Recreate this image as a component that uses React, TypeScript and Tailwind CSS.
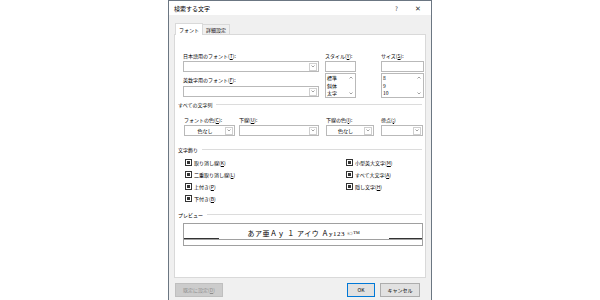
import type { ReactNode } from "react";

function Acc({ pre, k, post = "" }: { pre: string; k: string; post?: string }) {
  return (
    <>
      {pre}(<span className="underline">{k}</span>){post}
    </>
  );
}

function Combo({ width, value }: { width: string; value?: string }) {
  return (
    <div className={`${width} h-[11px] bg-white border border-[#b9b9b9] flex items-center`}>
      <div className="flex-1 text-center leading-[9px]">{value}</div>
      <div className="w-[8px] h-[8px] mr-[1px] border border-[#cfcfcf] flex items-center justify-center">
        <svg width="4" height="3" viewBox="0 0 4 3">
          <path d="M0.5 0.5 L2 2 L3.5 0.5" fill="none" stroke="#7a7a7a" strokeWidth="0.7" />
        </svg>
      </div>
    </div>
  );
}

function ListBox({ items }: { items: string[] }) {
  return (
    <div className="h-[25px] bg-white border border-[#b9b9b9] flex">
      <div className="flex-1 pl-[1px] leading-[7.5px]">
        {items.map((it) => (
          <div key={it}>{it}</div>
        ))}
      </div>
      <div className="w-[8px] flex flex-col justify-between items-center py-[2px]">
        <svg width="4" height="3" viewBox="0 0 4 3">
          <path d="M0.5 2.5 L2 1 L3.5 2.5" fill="none" stroke="#7a7a7a" strokeWidth="0.7" />
        </svg>
        <svg width="4" height="3" viewBox="0 0 4 3">
          <path d="M0.5 0.5 L2 2 L3.5 0.5" fill="none" stroke="#7a7a7a" strokeWidth="0.7" />
        </svg>
      </div>
    </div>
  );
}

function Group({ title, className = "" }: { title: string; className?: string }) {
  return (
    <div className={`flex items-center gap-[4px] pl-[3px] pr-[3px] h-[7px] leading-[7px] ${className}`}>
      <span>{title}</span>
      <div className="flex-1 h-px bg-[#dcdcdc]" />
    </div>
  );
}

function Check({ children }: { children: ReactNode }) {
  return (
    <div className="h-[12px] flex items-center gap-[2px]">
      <div className="w-[7px] h-[7px] border border-[#333] bg-white p-px">
        <div className="w-[3px] h-[3px] bg-[#333]" />
      </div>
      <span className="leading-[7px]">{children}</span>
    </div>
  );
}

export default function App() {
  return (
    <div className="w-[600px] h-[300px] bg-white flex justify-center font-['Noto_Sans_CJK_JP',sans-serif] text-[5px] text-black overflow-hidden">
      <div className="w-[264px] h-[300px] bg-[#f0f0f0] border-t border-x border-[#6b7682] flex flex-col">
        {/* title bar */}
        <div className="h-[14px] bg-white flex items-center pl-[5px] pr-[10px] text-[6px]">
          <span className="flex-1">検索する文字</span>
          <span className="w-[20px] text-[#333]">?</span>
          <span className="text-[#333] text-[7px]">✕</span>
        </div>

        {/* tabs */}
        <div className="flex items-end h-[19px] pl-[6px] pt-[7px]">
          <div className="h-[12px] px-[3px] bg-white border border-b-0 border-[#d9d9d9] flex items-center relative top-px z-10">
            フォント
          </div>
          <div className="h-[10px] px-[3px] bg-[#f0f0f0] border border-l-0 border-b-0 border-[#d9d9d9] flex items-center">
            詳細設定
          </div>
        </div>

        {/* panel */}
        <div className="mx-[5px] h-[244px] bg-white border border-[#d9d9d9] flex flex-col">
          {/* fonts */}
          <div className="mt-[17px] flex pl-[8px]">
            <div className="w-[136px] flex flex-col">
              <div className="leading-[7px] h-[7px]">
                <Acc pre="日本語用のフォント" k="T" post=":" />
              </div>
              <div className="mt-[2px]">
                <Combo width="w-[136px]" />
              </div>
              <div className="mt-[4px] leading-[7px] h-[7px]">
                <Acc pre="英数字用のフォント" k="F" post=":" />
              </div>
              <div className="mt-[3px]">
                <Combo width="w-[136px]" />
              </div>
            </div>
            <div className="w-[31px] ml-[6px] flex flex-col">
              <div className="leading-[7px] h-[7px]">
                <Acc pre="スタイル" k="Y" post=":" />
              </div>
              <div className="mt-[2px] h-[11px] bg-white border border-[#b9b9b9]" />
              <div className="mt-[1px]">
                <ListBox items={["標準", "斜体", "太字"]} />
              </div>
            </div>
            <div className="w-[43px] ml-[25px] flex flex-col">
              <div className="leading-[7px] h-[7px]">
                <Acc pre="サイズ" k="S" post=":" />
              </div>
              <div className="mt-[2px] h-[11px] bg-white border border-[#b9b9b9]" />
              <div className="mt-[1px]">
                <ListBox items={["8", "9", "10"]} />
              </div>
            </div>
          </div>

          {/* all text */}
          <Group title="すべての文字列" className="mt-[3px]" />
          <div className="mt-[8px] flex pl-[9px]">
            <div className="w-[51px]">
              <div className="leading-[7px] h-[7px]">
                <Acc pre="フォントの色" k="C" post=":" />
              </div>
              <div className="mt-[2px]">
                <Combo width="w-[51px]" value="色なし" />
              </div>
            </div>
            <div className="w-[80px] ml-[4px]">
              <div className="leading-[7px] h-[7px]">
                <Acc pre="下線" k="U" post=":" />
              </div>
              <div className="mt-[2px]">
                <Combo width="w-[80px]" />
              </div>
            </div>
            <div className="w-[48px] ml-[7px]">
              <div className="leading-[7px] h-[7px]">
                <Acc pre="下線の色" k="I" post=":" />
              </div>
              <div className="mt-[2px]">
                <Combo width="w-[48px]" value="色なし" />
              </div>
            </div>
            <div className="w-[42px] ml-[7px]">
              <div className="leading-[7px] h-[7px]">
                <Acc pre="傍点" k=";" />
              </div>
              <div className="mt-[2px]">
                <Combo width="w-[42px]" />
              </div>
            </div>
          </div>

          {/* effects */}
          <Group title="文字飾り" className="mt-[10px]" />
          <div className="mt-[3px] flex pl-[10px]">
            <div className="w-[161px] flex flex-col">
              <Check>
                <Acc pre="取り消し線" k="K" />
              </Check>
              <Check>
                <Acc pre="二重取り消し線" k="L" />
              </Check>
              <Check>
                <Acc pre="上付き" k="P" />
              </Check>
              <Check>
                <Acc pre="下付き" k="B" />
              </Check>
            </div>
            <div className="flex flex-col">
              <Check>
                <Acc pre="小型英大文字" k="M" />
              </Check>
              <Check>
                <Acc pre="すべて大文字" k="A" />
              </Check>
              <Check>
                <Acc pre="隠し文字" k="H" />
              </Check>
            </div>
          </div>

          {/* preview */}
          <Group title="プレビュー" className="mt-[7px]" />
          <div className="mt-[5px] ml-[8px] w-[240px] h-[23px] border border-[#a0a0a0] flex flex-col">
            <div className="h-[15px] flex items-end">
              <div className="w-[35px] h-[2px] border-b border-[#333]" />
              <div className="flex-1 text-center font-['Liberation_Serif','Noto_Sans_CJK_JP',serif] text-[7px] leading-[9px] tracking-[0.5px]">
                あア亜Ａｙ １ アイウ Ａy123 ©™
              </div>
              <div className="w-[33px] h-[2px] border-b border-[#333]" />
            </div>
            <div className="h-px bg-[#a0a0a0]" />
          </div>
        </div>

        {/* buttons */}
        <div className="mt-[5px] flex pl-[6px] pr-[11px]">
          <div className="w-[48px] h-[14px] bg-[#cccccc] border border-[#bfbfbf] text-[#8c8c8c] flex items-center justify-center">
            <Acc pre="既定に設定" k="D" />
          </div>
          <div className="flex-1" />
          <div className="w-[28px] h-[14px] bg-[#e1e1e1] border border-[#0078d7] flex items-center justify-center">
            OK
          </div>
          <div className="w-[40px] ml-[5px] h-[14px] bg-[#e1e1e1] border border-[#adadad] flex items-center justify-center">
            キャンセル
          </div>
        </div>
      </div>
    </div>
  );
}
